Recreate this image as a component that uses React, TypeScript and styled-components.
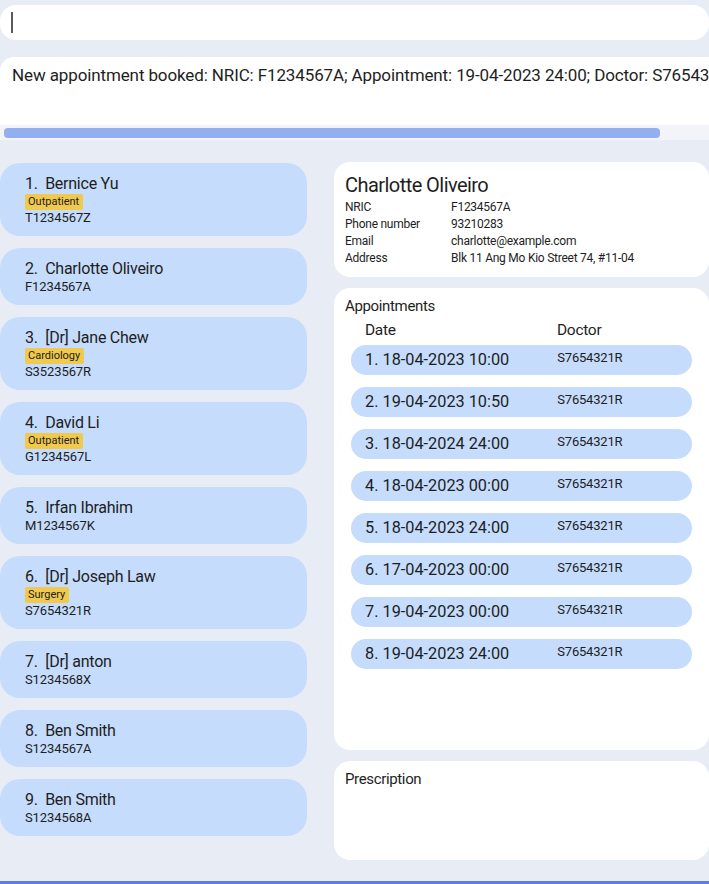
import React from "react";
import styled, { createGlobalStyle } from "styled-components";

const Global = createGlobalStyle`
  html, body { margin: 0; padding: 0; }
  body {
    background: #e8ecf5;
    font-family: Roboto, "Liberation Sans", sans-serif;
    color: #1e1e22;
  }
  * { box-sizing: border-box; }
`;

const Page = styled.div`
  height: 884px;
  display: flex;
  flex-direction: column;
  overflow: hidden;
`;

const CommandBox = styled.div`
  margin-top: 5px;
  height: 35px;
  width: 709px;
  background: #ffffff;
  border-radius: 16px;
  display: flex;
  align-items: center;
  padding-left: 11px;
`;

const Caret = styled.span`
  width: 2px;
  height: 21px;
  background: #5a5a5a;
`;

const ResultPane = styled.div`
  margin-top: 17px;
  display: flex;
  flex-direction: column;
`;

const ResultText = styled.div`
  height: 68px;
  background: #ffffff;
  border-top-left-radius: 14px;
  padding: 8px 0 0 12px;
  font-size: 17px;
  line-height: 20px;
  letter-spacing: -0.12px;
  white-space: nowrap;
  overflow: hidden;
`;

const ScrollTrack = styled.div`
  height: 15px;
  background: #f3f4f9;
  padding: 3px 0 0 4px;
`;

const ScrollThumb = styled.div`
  width: 656px;
  height: 10px;
  border-radius: 4px;
  background: #93aff0;
`;

const Main = styled.div`
  flex: 1;
  display: flex;
  gap: 27px;
  padding-top: 22px;
`;

const PersonList = styled.div`
  width: 307px;
  display: flex;
  flex-direction: column;
  gap: 12px;
  padding-top: 1px;
`;

const PersonCard = styled.div`
  background: #c5dcfc;
  border-radius: 20px;
  padding: 10px 0 10px 25px;
  display: flex;
  flex-direction: column;
`;

const PersonName = styled.div`
  font-size: 16px;
  line-height: 21px;
  letter-spacing: -0.25px;
  white-space: pre;
`;

const TagRow = styled.div`
  height: 16px;
  display: flex;
  align-items: center;
`;

const Tag = styled.span`
  background: #f0c94d;
  border-radius: 2px;
  font-size: 11px;
  line-height: 16px;
  padding: 0 4px 0 3px;
`;

const PersonId = styled.div`
  font-size: 13px;
  line-height: 16px;
  letter-spacing: -0.1px;
`;

const RightColumn = styled.div`
  width: 375px;
  display: flex;
  flex-direction: column;
  gap: 11px;
`;

const Panel = styled.div<{ $height: number }>`
  background: #ffffff;
  border-radius: 16px;
  height: ${(p) => p.$height}px;
  padding: 10px 11px;
  display: flex;
  flex-direction: column;
`;

const DetailName = styled.div`
  font-size: 20px;
  line-height: 26px;
  letter-spacing: -0.55px;
  margin-bottom: 1px;
`;

const DetailGrid = styled.div`
  display: grid;
  grid-template-columns: 106px 1fr;
  font-size: 12px;
  line-height: 17px;
  letter-spacing: -0.25px;
`;

const SectionTitle = styled.div`
  font-size: 15px;
  line-height: 16px;
  letter-spacing: -0.35px;
`;

const ApptHeader = styled.div`
  display: flex;
  padding-left: 20px;
  margin-top: 7px;
  font-size: 15.5px;
  line-height: 18px;
  letter-spacing: -0.3px;
`;

const HeaderDate = styled.span`
  width: 192px;
`;

const ApptList = styled.div`
  display: flex;
  flex-direction: column;
  gap: 12px;
  margin: 6px 6px 0 6px;
`;

const ApptRow = styled.div`
  height: 30px;
  border-radius: 15px;
  background: #c5dcfc;
  display: flex;
  align-items: center;
  padding-left: 14px;
`;

const ApptDate = styled.span`
  font-size: 16.3px;
  line-height: 20px;
`;

const ApptDoctor = styled.span`
  font-size: 13px;
  letter-spacing: -0.2px;
  margin-left: 48px;
  margin-top: -5px;
`;

const BottomBar = styled.div`
  height: 3px;
  background: #5a7fe3;
`;

type Person = { name: string; tag?: string; id: string };

const people: Person[] = [
  { name: "Bernice Yu", tag: "Outpatient", id: "T1234567Z" },
  { name: "Charlotte Oliveiro", id: "F1234567A" },
  { name: "[Dr] Jane Chew", tag: "Cardiology", id: "S3523567R" },
  { name: "David Li", tag: "Outpatient", id: "G1234567L" },
  { name: "Irfan Ibrahim", id: "M1234567K" },
  { name: "[Dr] Joseph Law", tag: "Surgery", id: "S7654321R" },
  { name: "[Dr] anton", id: "S1234568X" },
  { name: "Ben Smith", id: "S1234567A" },
  { name: "Ben Smith", id: "S1234568A" },
];

const appts = [
  "18-04-2023 10:00",
  "19-04-2023 10:50",
  "18-04-2024 24:00",
  "18-04-2023 00:00",
  "18-04-2023 24:00",
  "17-04-2023 00:00",
  "19-04-2023 00:00",
  "19-04-2023 24:00",
];

const details: [string, string][] = [
  ["NRIC", "F1234567A"],
  ["Phone number", "93210283"],
  ["Email", "charlotte@example.com"],
  ["Address", "Blk 11 Ang Mo Kio Street 74, #11-04"],
];

export default function App() {
  return (
    <Page>
      <Global />
      <CommandBox>
        <Caret />
      </CommandBox>
      <ResultPane>
        <ResultText>
          New appointment booked: NRIC: F1234567A; Appointment: 19-04-2023 24:00; Doctor: S7654321R
        </ResultText>
        <ScrollTrack>
          <ScrollThumb />
        </ScrollTrack>
      </ResultPane>
      <Main>
        <PersonList>
          {people.map((p, i) => (
            <PersonCard key={i}>
              <PersonName>{`${i + 1}.  ${p.name}`}</PersonName>
              {p.tag && (
                <TagRow>
                  <Tag>{p.tag}</Tag>
                </TagRow>
              )}
              <PersonId>{p.id}</PersonId>
            </PersonCard>
          ))}
        </PersonList>
        <RightColumn>
          <Panel $height={115}>
            <DetailName>Charlotte Oliveiro</DetailName>
            <DetailGrid>
              {details.map(([k, v]) => (
                <React.Fragment key={k}>
                  <span>{k}</span>
                  <span>{v}</span>
                </React.Fragment>
              ))}
            </DetailGrid>
          </Panel>
          <Panel $height={462}>
            <SectionTitle>Appointments</SectionTitle>
            <ApptHeader>
              <HeaderDate>Date</HeaderDate>
              <span>Doctor</span>
            </ApptHeader>
            <ApptList>
              {appts.map((a, i) => (
                <ApptRow key={i}>
                  <ApptDate>{`${i + 1}. ${a}`}</ApptDate>
                  <ApptDoctor>S7654321R</ApptDoctor>
                </ApptRow>
              ))}
            </ApptList>
          </Panel>
          <Panel $height={99}>
            <SectionTitle>Prescription</SectionTitle>
          </Panel>
        </RightColumn>
      </Main>
      <BottomBar />
    </Page>
  );
}
